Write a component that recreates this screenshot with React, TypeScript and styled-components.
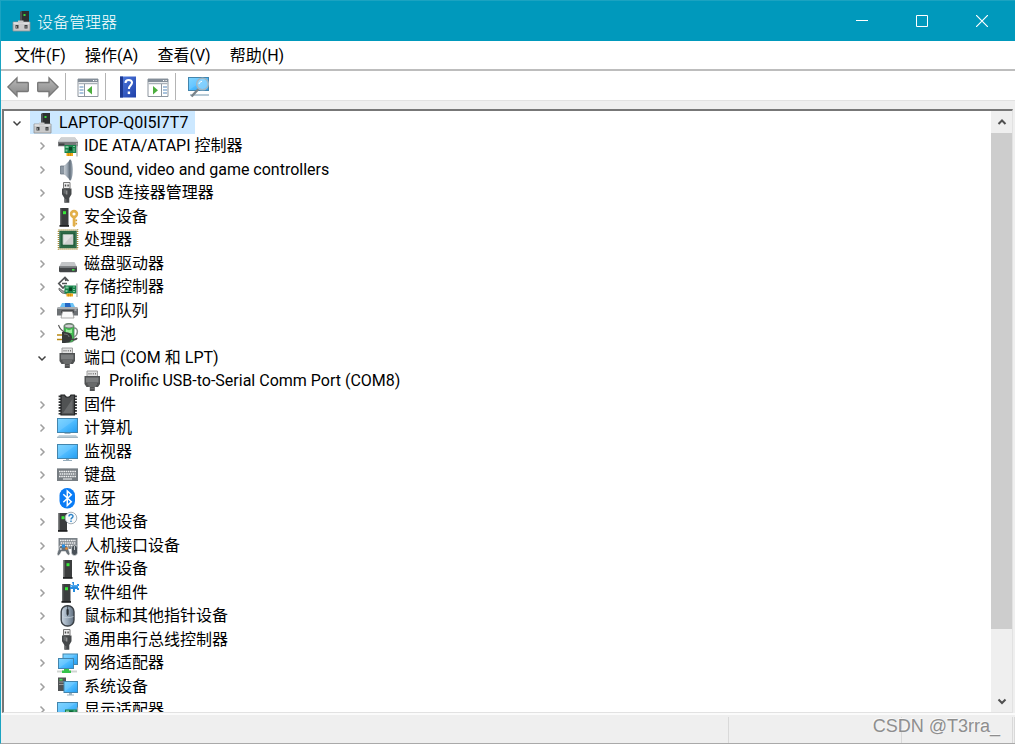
import React, { useState } from 'react';
import styled, { createGlobalStyle } from 'styled-components';

const GlobalStyle = createGlobalStyle`
  * { box-sizing: border-box; }
  body {
    margin: 0;
    font-family: Roboto, "Noto Sans CJK SC", sans-serif;
    font-size: 16px;
    color: #000;
  }
  button { font: inherit; color: inherit; background: none; border: 0; padding: 0; }
  svg { display: block; }
`;

const Window = styled.div`
  height: 100vh;
  display: flex;
  flex-direction: column;
  background: #efefef;
  border-left: 1px solid #1ba3c1;
  border-bottom: 1px solid #a9a9a9;
`;

const TitleBar = styled.header`
  flex: none;
  height: 41px;
  display: flex;
  align-items: center;
  gap: 4px;
  padding-left: 10px;
  background: #0099bc;
  border-top: 1px solid #1ba3c1;
  color: #fff;
`;

const Title = styled.h1`
  flex: 1;
  margin: 0;
  font-size: 16px;
  font-weight: 300;
  font-family: "Noto Sans CJK SC", sans-serif;
  line-height: 22px;
`;

const CaptionButton = styled.button`
  width: 60px;
  height: 40px;
  display: grid;
  place-items: center;
`;

const Captions = styled.div`
  display: flex;
  padding-right: 3px;
`;

const MenuBar = styled.nav`
  flex: none;
  height: 28px;
  display: flex;
  align-items: center;
  gap: 19px;
  padding: 2px 0 0 13px;
  background: #fff;
`;

const MenuButton = styled.button`
  line-height: 24px;
  white-space: nowrap;
`;

const ToolBar = styled.div`
  flex: none;
  height: 32px;
  display: flex;
  align-items: center;
  padding-top: 2px;
  background: #fff;
  border-top: 2px solid #bdbdbd;
  border-bottom: 1px solid #e2e2e2;
`;

const ToolGroup = styled.div<{ $first?: boolean; $last?: boolean }>`
  height: 27px;
  display: flex;
  align-items: center;
  gap: 8px;
  padding: 0 6px 0 ${p => (p.$first ? 6 : 11)}px;
  border-right: ${p => (p.$last ? 0 : 1)}px solid #b4b4b4;
`;

const Pane = styled.main`
  flex: 1;
  min-height: 0;
  margin: 8px 2px 0 1px;
  display: flex;
  background: #fff;
  border: 2px solid #777;
  border-right: 1px solid #e2e2e2;
  border-bottom: 1px solid #e2e2e2;
`;

const Tree = styled.ul`
  flex: 1;
  min-width: 0;
  margin: 0;
  padding: 0;
  list-style: none;
  overflow: hidden;
  display: grid;
  grid-auto-rows: 23px 24px;
  align-content: start;
`;

const Row = styled.li<{ $depth: number }>`
  display: flex;
  align-items: center;
  gap: 4px;
  padding-left: ${p => 4 + p.$depth * 25}px;
`;

const Expander = styled.button`
  width: 18px;
  height: 18px;
  display: grid;
  place-items: center;
`;

const ExpanderSpace = styled.span`
  width: 18px;
`;

const Node = styled.span<{ $selected?: boolean }>`
  height: 100%;
  display: flex;
  align-items: center;
  gap: 5px;
  padding: 0 7px 0 2px;
  line-height: 24px;
  white-space: pre;
  background: ${p => (p.$selected ? '#cce8ff' : 'transparent')};
`;

const ScrollBar = styled.div`
  width: 21px;
  display: flex;
  flex-direction: column;
  background: #efefef;
`;

const ScrollButton = styled.button`
  height: 22px;
  display: grid;
  place-items: center;
`;

const Track = styled.div`
  flex: 1;
  display: flex;
  flex-direction: column;
`;

const Thumb = styled.div`
  flex: 0 0 89%;
  background: #cdcdcd;
`;

const StatusBar = styled.footer`
  flex: none;
  height: 30px;
  position: relative;
  display: flex;
  border-top: 2px solid #fbfbfb;
`;

const StatusCell = styled.div<{ $width?: number }>`
  flex: ${p => (p.$width ? `0 0 ${p.$width}px` : '1')};
  margin-top: 2px;
  border-right: 1px solid #d9d9d9;
`;

const Watermark = styled.span`
  position: absolute;
  right: 15px;
  top: 0;
  font-family: "Liberation Sans", sans-serif;
  font-size: 18px;
  line-height: 22px;
  color: #8e8e8e;
  text-shadow: -1px -1px 0 #f8f8f8;
`;

const Svg = ({ children, size = 22 }: { children: React.ReactNode; size?: number }) => (
  <svg width={size} height={size} viewBox="0 0 22 22" aria-hidden="true">{children}</svg>
);

const HiddenSvg = styled.svg`
  position: absolute;
`;

const Defs = () => (
  <HiddenSvg width="0" height="0" aria-hidden="true">
    <defs>
      <linearGradient id="screen" x1="0" y1="0" x2="1" y2="1">
        <stop offset="0" stopColor="#6fd0ff" /><stop offset=".5" stopColor="#4fbcff" /><stop offset="1" stopColor="#239cf0" />
      </linearGradient>
      <linearGradient id="arrow" x1="0" y1="0" x2="0" y2="1">
        <stop offset="0" stopColor="#b9b9b9" /><stop offset="1" stopColor="#858585" />
      </linearGradient>
      <linearGradient id="cone" x1="0" y1="0" x2="1" y2="0">
        <stop offset="0" stopColor="#c3cad1" /><stop offset=".5" stopColor="#a2adb8" /><stop offset="1" stopColor="#5d6a77" />
      </linearGradient>
      <linearGradient id="help" x1="0" y1="0" x2="1" y2="1">
        <stop offset="0" stopColor="#4f7be0" /><stop offset="1" stopColor="#1f40a8" />
      </linearGradient>
      <linearGradient id="mouse" x1="0" y1="0" x2="1" y2="0">
        <stop offset="0" stopColor="#cdd7e2" /><stop offset=".5" stopColor="#98a8b8" /><stop offset="1" stopColor="#5f6e7d" />
      </linearGradient>
    </defs>
  </HiddenSvg>
);

const Tower = ({ x, y = 2 }: { x: number; y?: number }) => (
  <g transform={`translate(${x} ${y})`}>
    <path d="M.5 0h8.5v18H.5z" fill="#3b3d3e" />
    <path d="M.5 0h1.300v18H.5z" fill="#67696a" />
    <path d="M0 17h9.500v1.800H0z" fill="#202122" />
    <path d="M3.500 3.200h3v3h-3z" fill="#38e83a" />
  </g>
);

const Screen = ({ x, y, w, h }: { x: number; y: number; w: number; h: number }) => (
  <>
    <rect x={x + 0.5} y={y + 0.5} width={w - 1} height={h - 1} fill="url(#screen)" stroke="#4385ad" />
    <path d={`M${x + 1} ${y + h - 1}L${x + w - 2} ${y + 1}H${x + 1}z`} fill="#fff" opacity=".12" />
  </>
);

const Board = ({ x, y }: { x: number; y: number }) => (
  <g transform={`translate(${x} ${y})`}>
    <path d="M0 1.500h12v8H0z" fill="#17834a" />
    <path d="M1 2.500h3v2H1zM1 6h2v2H1zM8.500 2.500h2v1h-2zM8.500 5h2v1h-2zM8.500 7h2v1h-2z" fill="#7cc49a" />
    <path d="M4.500 3.500h3v3.500h-3z" fill="#0a4327" />
    <path d="M2 9.500h6.500v3H2z" fill="#f0a91a" />
    <path d="M4 9.500v3M6 9.500v3" stroke="#b77b0b" strokeWidth=".5" />
    <path d="M11.500 0h1v13" fill="none" stroke="#a3a5a6" strokeWidth="1.200" />
  </g>
);

const SerialPlug = () => (
  <Svg>
    <path d="M5 1h10.500v6H5z" fill="#e1e1e1" stroke="#969696" strokeWidth=".9" />
    <path d="M7 3v1.500M9 3v1.500M11.300 3v1.500M13.500 3v1.500" stroke="#777" />
    <path d="M2.500 6h15.500v8l-2 3h-3.200v4H7.800v-4H4.500l-2-3z" fill="#505253" />
    <path d="M4 7.500h12.500v5H4z" fill="#7b7d7e" />
    <path d="M5.500 14h9.500M6.500 16h7.500" stroke="#8e9091" strokeWidth=".8" />
    <path d="M8.500 18.500h4" stroke="#777" strokeWidth=".7" />
  </Svg>
);

const UsbPlug = () => (
  <Svg>
    <path d="M6.500.5h6.500v6H6.500z" fill="#ededed" stroke="#777" />
    <path d="M7.800 2.500h1.400v2H7.800zM10.400 2.500h1.400v2h-1.400z" fill="#4b4b4b" />
    <path d="M5 6.500h9.500v5.800L12.300 16v4.800H7.300V16L5 12.300z" fill="#45484a" />
    <path d="M6.500 7.500h2.500v5l-1.200-1-1.300 0z" fill="#66696b" />
    <path d="M9.800 8.500v4" stroke="#c9c9c9" strokeWidth=".8" />
    <path d="M8.800 17v3" stroke="#777" />
  </Svg>
);

const KeyRows = ({ x, y, w }: { x: number; y: number; w: number }) => (
  <g stroke="#f0f1f2" strokeWidth="1.400" strokeDasharray="1.600 .6">
    <path d={`M${x} ${y}h${w}M${x + 0.6} ${y + 2.5}h${w - 1}M${x} ${y + 5}h${w}`} />
  </g>
);

const icons: Record<string, React.ReactNode> = {
  machine: (
    <Svg>
      <path d="M9 2l2-1h7v12H9z" fill="#2d3031" />
      <path d="M9 2l2-1v12H9z" fill="#4d5153" />
      <path d="M12.500 4h2v2h-2z" fill="#38d83c" />
      <path d="M2 12h17v9H2z" fill="#c9cacb" stroke="#909294" strokeWidth=".8" />
      <path d="M2.500 12.500h16v1h-16z" fill="#f7f7f7" />
      <path d="M7 10.500h5.500v3H7z" fill="#c9cacb" />
      <path d="M4.500 15h3v3.500h-3zM13.500 15h3v3.500h-3z" fill="#3e4142" />
      <path d="M5.500 16v2M15 16v2" stroke="#a9a9a9" strokeWidth=".7" />
    </Svg>
  ),
  ide: (
    <Svg>
      <path d="M4 2.500h14l3 4v5H1v-5z" fill="#aeb1b4" />
      <path d="M4 2.500h14l3 4H1z" fill="#cfd1d3" />
      <path d="M1 7h20v4H1z" fill="#77797b" />
      <path d="M2 8.500h5.500v2H2z" fill="#3e4143" />
      <Board x={7.5} y={8.5} />
    </Svg>
  ),
  sound: (
    <Svg>
      <path d="M3.500 7h5v8h-5z" fill="#8d98a3" stroke="#6a7580" strokeWidth=".8" />
      <path d="M7 7L13 1v20l-6-6z" fill="url(#cone)" />
      <path d="M12.500.5h1.300c1.200 2 1.900 6 1.900 10.500s-.7 8.500-1.900 10.500h-1.300z" fill="#8a96a2" />
      <path d="M13 1v20" stroke="#56626e" strokeWidth=".9" />
    </Svg>
  ),
  usb: <UsbPlug />,
  security: (
    <Svg>
      <Tower x={2.5} />
      <circle cx="17" cy="8" r="2.900" fill="none" stroke="#e2b04a" strokeWidth="2.600" />
      <path d="M15.700 11h2.800v8.500l-1.400 1.700-1.400-1.700z" fill="#e2b04a" />
      <path d="M18.500 13.500h1.600v1.800h-1.600M18.500 16.800h1.600v1.700h-1.600" fill="#d39c2c" />
    </Svg>
  ),
  cpu: (
    <Svg>
      <rect x="1.500" y="1" width="19" height="19" fill="none" stroke="#a98f38" strokeWidth="1.600" strokeDasharray="1.100 .9" />
      <path d="M2.300 1.800h17.400v17.400H2.300z" fill="#26603f" />
      <path d="M3.500 3h15v15h-15z" fill="none" stroke="#3e7f58" strokeWidth=".7" />
      <path d="M6 5.500h10v10H6z" fill="#e3e4e4" stroke="#a8bcae" strokeWidth=".8" />
      <path d="M7 15l8.500-9v9z" fill="#cfd0d0" />
    </Svg>
  ),
  disk: (
    <Svg>
      <path d="M4.500 9h13l2.500 5H2z" fill="#c3c5c7" />
      <path d="M2 13.500h18v5l-1 .8H3l-1-.8z" fill="#434648" />
      <path d="M2.500 14h17v1h-17z" fill="#787b7e" />
      <path d="M15 16h2.500v1.600H15z" fill="#41df49" />
    </Svg>
  ),
  storage: (
    <Svg>
      <path d="M11.500 5L8 1.500 1.800 7.500 6 12l2.500-2.500M8 1.500l1 3.500M5 7.500h5" fill="none" stroke="#515456" strokeWidth="1.700" />
      <path d="M2 12l4 3h4v3L5 17l-3-3z" fill="#9da1a4" stroke="#666" strokeWidth=".8" />
      <Board x={7.5} y={8} />
    </Svg>
  ),
  printer: (
    <Svg>
      <path d="M5 3h11l2 4H3z" fill="#6cc3f5" />
      <path d="M8 3h5l1 4H8z" fill="#2467c4" />
      <path d="M1 7h19l1 2v6.500H0V9z" fill="#6d7174" />
      <path d="M1 7h19l1 2H0z" fill="#aaaeb1" />
      <path d="M4.500 10.500h12v2.500h-12z" fill="#242729" />
      <path d="M5.500 11.500h10l1.500 6.500H4z" fill="#fafafa" stroke="#888" strokeWidth=".7" />
      <path d="M17.500 9.500h2v1h-2z" fill="#d4d6d8" />
    </Svg>
  ),
  battery: (
    <Svg>
      <path d="M7 3c0-3.500 10-3.500 10 0v14c0 3-10 3-10 0z" fill="#41bd51" stroke="#4d6f55" strokeWidth=".8" />
      <ellipse cx="12" cy="3" rx="4.500" ry="2" fill="#cdd2d0" stroke="#626765" strokeWidth=".8" />
      <path d="M9 6c2 1.500 4 1.500 6 0v4H9z" fill="#9deb9c" />
      <path d="M17 5c5 0 4 7 0 9" stroke="#858c88" strokeWidth="1.500" fill="none" />
      <path d="M1.500 2c1 3 2 5 6 7" stroke="#555" strokeWidth="1.100" fill="none" />
      <path d="M0 12h5M0 16.500h5" stroke="#b98913" strokeWidth="1.600" />
      <path d="M5 9h3c5 0 7 3 7 5.500S13 20 8 20H5z" fill="#373939" />
      <path d="M7 11c3 0 5 1 5 3" stroke="#777" fill="none" />
      <path d="M14 16c3 1 5 1 6-1" stroke="#444" strokeWidth="1.800" fill="none" />
    </Svg>
  ),
  port: <SerialPlug />,
  firmware: (
    <Svg>
      <path d="M2.800 1.500v19M18.700 1.500v19" stroke="#2d2f30" strokeWidth="2.400" strokeDasharray="1.700 1.200" />
      <path d="M4 1h3.500c1 3 5.500 3 6.500 0h3.500v20H4z" fill="#505253" stroke="#222425" strokeWidth="1.200" />
      <path d="M6 19L15.500 5v14z" fill="#696b6c" />
    </Svg>
  ),
  computer: (
    <Svg>
      <Screen x={0} y={1} w={21} h={15} />
      <path d="M7.500 16h6v1h-6z" fill="#9fb6c4" />
      <path d="M2 18h17l2 2.500H0z" fill="#c6d5de" />
      <path d="M0 20.300h21" stroke="#829caa" strokeWidth=".8" />
    </Svg>
  ),
  monitor: (
    <Svg>
      <Screen x={0} y={3} w={21} h={15} />
      <path d="M9 18h3v1h3v1H6v-1h3z" fill="#96adbc" />
    </Svg>
  ),
  keyboard: (
    <Svg>
      <path d="M0 4h21v13H0z" fill="#777d82" />
      <path d="M0 4h21v1H0z" fill="#a8adb1" />
      <KeyRows x={2} y={7.5} w={17} />
      <path d="M6 15h9" stroke="#e3e5e7" strokeWidth="1.200" />
    </Svg>
  ),
  bluetooth: (
    <Svg>
      <rect x="2.500" y="0" width="15.500" height="20.500" rx="7.500" fill="#0a7cf5" />
      <path d="M6.300 6.300l8 7.400-4 3.800V3l4 3.700-8 7.500" fill="none" stroke="#fff" strokeWidth="1.500" />
    </Svg>
  ),
  other: (
    <Svg>
      <Tower x={1} />
      <circle cx="14" cy="7" r="5.800" fill="#f7fafc" stroke="#a5afb7" />
      <path d="M12 5.500c0-2.600 4-2.600 4-.2 0 1.700-2 1.500-2 3.200M14 9.500v1.500" fill="none" stroke="#2c82c6" strokeWidth="1.400" />
    </Svg>
  ),
  hid: (
    <Svg>
      <path d="M1.500 3h19v11h-19z" fill="#7c8389" />
      <KeyRows x={3} y={5.5} w={16} />
      <path d="M2.500 11c2-.8 6-.8 8 0l2.500 8c-1.500 2.500-3 .5-4.500-2.500h-4C3 20 1 22 0 19z" fill="#687077" stroke="#f1f1f1" strokeWidth=".6" />
      <path d="M5 9.500h3v3H5z" fill="#258fe6" />
      <circle cx="9.500" cy="13.500" r="1.200" fill="#ef8a2c" />
      <circle cx="3.800" cy="14" r="1.100" fill="#c6cdd2" />
      <rect x="14.500" y="10" width="6" height="10.500" rx="3" fill="#495158" stroke="#d8dde0" strokeWidth=".7" />
      <path d="M17.500 11v4" stroke="#bcc3c8" />
    </Svg>
  ),
  software: <Svg><Tower x={6} /></Svg>,
  component: (
    <Svg>
      <Tower x={4.5} />
      <path d="M15 0h2v3h3v-1h2v2h-1v2h1v2h-2V7h-2v3h-2V7h-3V5h2V3h1z" fill="#278de0" />
      <path d="M13 3h8v1.500h-8z" fill="#4fa6ec" />
    </Svg>
  ),
  mouse: (
    <Svg>
      <rect x="4.200" y=".7" width="12.800" height="20.300" rx="6" fill="url(#mouse)" stroke="#3b4147" strokeWidth="1.400" />
      <path d="M10.600 1v10" stroke="#47515a" />
      <rect x="9.500" y="4" width="2.200" height="6" rx="1.100" fill="#2b3036" />
      <path d="M5 11.500c3 1.500 8 1.500 11.500 0" stroke="#cbd5de" strokeWidth=".7" fill="none" />
    </Svg>
  ),
  network: (
    <Svg>
      <Screen x={5.5} y={1.5} w={15.5} h={11.5} />
      <Screen x={1} y={6} w={16} h={11} />
      <path d="M0 18.500h20v2H0z" fill="#d0d5d2" />
      <path d="M7 17h5v1.500h2V21H5v-2.500h2z" fill="#35c44b" />
    </Svg>
  ),
  system: (
    <Svg>
      <path d="M1 1.500h8V15H1z" fill="#505355" />
      <path d="M2 6h5M2 8.500h5" stroke="#999" />
      <path d="M2.500 2.800h3v1.700h-3z" fill="#44de55" />
      <Screen x={6.5} y={5} w={14.5} h={12} />
      <path d="M12 17h3v1.500h2v1h-7v-1h2z" fill="#9bb2c0" />
    </Svg>
  ),
  display: (
    <Svg>
      <Screen x={0} y={3} w={21} h={14} />
      <Board x={8} y={9} />
    </Svg>
  ),
};

const Arrow = ({ flip }: { flip?: boolean }) => (
  <Svg>
    <path
      transform={flip ? 'matrix(-1 0 0 1 22 0)' : undefined}
      d="M.8 11L10 1.800V6.500h10.500q.8 0 .8.800v7.400q0 .8-.8.8H10v4.700z"
      fill="url(#arrow)" stroke="#777" strokeWidth="1.300"
    />
  </Svg>
);

const PanelIcon = ({ right }: { right?: boolean }) => (
  <Svg>
    <path d="M1 3h20v17.500H1z" fill="#fff" stroke="#8e969f" />
    <path d="M1 3h20v3H1z" fill="#848e99" />
    <path d="M1.500 7.500h19" stroke="#a9b1b9" strokeWidth="1.500" />
    <path d="M16 4.500h1.200M18.500 4.500h1.200" stroke="#fff" />
    <path d={right ? 'M14.500 8v12.500' : 'M7.500 8v12.500'} stroke="#8e969f" />
    <path d={right ? 'M16 11h4M16 14h4M16 17h4' : 'M2.500 11h4M2.500 14h4M2.500 17h4'} stroke="#5488bc" strokeWidth="1.200" />
    <path d={right ? 'M6 10l5 4.300-5 4.300z' : 'M15 10l-5 4.300 5 4.300z'} fill="#4cae3e" />
  </Svg>
);

const HelpIcon = () => (
  <Svg>
    <path d="M3 .5h16v21H3z" fill="url(#help)" />
    <path d="M3 .5h3v21H3z" fill="#1d3991" />
    <path d="M8.500 7c0-4 6.500-3.800 6.500-.4 0 3-3.100 3-3.100 6.400" fill="none" stroke="#fff" strokeWidth="2.100" />
    <path d="M10.700 15.500h2.400v2.600h-2.400z" fill="#fff" />
  </Svg>
);

const ScanIcon = () => (
  <Svg>
    <Screen x={1} y={1} w={21} h={14} />
    <path d="M3 18h19v2H3z" fill="#b7cad6" />
    <path d="M11.500 13l-7 7.500" stroke="#7a8389" strokeWidth="2.400" />
    <circle cx="15.500" cy="8" r="5.800" fill="#9bdcff" fillOpacity=".7" stroke="#9eb6c4" strokeWidth="1.500" />
    <path d="M12 8c.5-1.500 1.500-2.500 3-2.700" stroke="#fff" fill="none" />
  </Svg>
);

const Chevron = ({ dir, color, bold }: { dir: 'up' | 'down' | 'right'; color: string; bold?: boolean }) => {
  const paths = { up: 'M2.500 8L6 4.500 9.500 8', down: 'M2.500 4.500L6 8l3.500-3.500', right: 'M4.500 2.500L8 6 4.500 9.500' };
  return (
    <svg width="12" height="12" viewBox="0 0 12 12" aria-hidden="true">
      <path d={paths[dir]} fill="none" stroke={color} strokeWidth={bold ? 2 : 1.5} />
    </svg>
  );
};

type Device = { label: string; icon: string; children?: Device[] };

const devices: Device[] = [
  { label: 'IDE ATA/ATAPI 控制器', icon: 'ide' },
  { label: 'Sound, video and game controllers', icon: 'sound' },
  { label: 'USB 连接器管理器', icon: 'usb' },
  { label: '安全设备', icon: 'security' },
  { label: '处理器', icon: 'cpu' },
  { label: '磁盘驱动器', icon: 'disk' },
  { label: '存储控制器', icon: 'storage' },
  { label: '打印队列', icon: 'printer' },
  { label: '电池', icon: 'battery' },
  { label: '端口 (COM 和 LPT)', icon: 'port', children: [{ label: 'Prolific USB-to-Serial Comm Port (COM8)', icon: 'port' }] },
  { label: '固件', icon: 'firmware' },
  { label: '计算机', icon: 'computer' },
  { label: '监视器', icon: 'monitor' },
  { label: '键盘', icon: 'keyboard' },
  { label: '蓝牙', icon: 'bluetooth' },
  { label: '其他设备', icon: 'other' },
  { label: '人机接口设备', icon: 'hid' },
  { label: '软件设备', icon: 'software' },
  { label: '软件组件', icon: 'component' },
  { label: '鼠标和其他指针设备', icon: 'mouse' },
  { label: '通用串行总线控制器', icon: 'usb' },
  { label: '网络适配器', icon: 'network' },
  { label: '系统设备', icon: 'system' },
  { label: '显示适配器', icon: 'display' },
];

type RowProps = { device: Device; depth: number; open?: boolean; leaf?: boolean; selected?: boolean; onToggle?: () => void };

const DeviceRow = ({ device, depth, open, leaf, selected, onToggle }: RowProps) => (
  <Row $depth={depth} role="treeitem" aria-level={depth + 1} aria-expanded={leaf ? undefined : !!open} aria-selected={!!selected}>
    {leaf ? <ExpanderSpace /> : (
      <Expander aria-label={device.label} onClick={onToggle}>
        <Chevron dir={open ? 'down' : 'right'} color={open ? '#404040' : '#a0a0a0'} />
      </Expander>
    )}
    <Node $selected={selected}>
      {icons[device.icon]}
      <span>{device.label}</span>
    </Node>
  </Row>
);

export default function App() {
  const [rootOpen, setRootOpen] = useState(true);
  const [portsOpen, setPortsOpen] = useState(true);

  return (
    <Window>
      <GlobalStyle />
      <Defs />
      <TitleBar>
        {icons.machine}
        <Title>设备管理器</Title>
        <Captions>
          <CaptionButton aria-label="最小化">
            <svg width="12" height="12"><path d="M0 5.500h12" stroke="#fff" /></svg>
          </CaptionButton>
          <CaptionButton aria-label="最大化">
            <svg width="12" height="12"><path d="M.5.5h11v11H.5z" fill="none" stroke="#fff" /></svg>
          </CaptionButton>
          <CaptionButton aria-label="关闭">
            <svg width="12" height="12"><path d="M0 0l12 12M12 0L0 12" stroke="#fff" strokeWidth="1.200" /></svg>
          </CaptionButton>
        </Captions>
      </TitleBar>
      <MenuBar>
        {['文件(F)', '操作(A)', '查看(V)', '帮助(H)'].map(item => (
          <MenuButton key={item}>{item}</MenuButton>
        ))}
      </MenuBar>
      <ToolBar role="toolbar">
        <ToolGroup $first>
          <button aria-label="后退"><Arrow /></button>
          <button aria-label="前进"><Arrow flip /></button>
        </ToolGroup>
        <ToolGroup>
          <button aria-label="显示/隐藏控制台树"><PanelIcon /></button>
        </ToolGroup>
        <ToolGroup>
          <button aria-label="帮助"><HelpIcon /></button>
          <button aria-label="显示/隐藏操作窗格"><PanelIcon right /></button>
        </ToolGroup>
        <ToolGroup $last>
          <button aria-label="扫描检测硬件改动"><ScanIcon /></button>
        </ToolGroup>
      </ToolBar>
      <Pane>
        <Tree role="tree">
          <DeviceRow device={{ label: 'LAPTOP-Q0I5I7T7', icon: 'machine' }} depth={0} open={rootOpen} selected onToggle={() => setRootOpen(!rootOpen)} />
          {rootOpen && devices.map(device => (
            <React.Fragment key={device.label}>
              <DeviceRow
                device={device}
                depth={1}
                open={!!device.children && portsOpen}
                onToggle={device.children ? () => setPortsOpen(!portsOpen) : undefined}
              />
              {portsOpen && device.children?.map(child => (
                <DeviceRow key={child.label} device={child} depth={2} leaf />
              ))}
            </React.Fragment>
          ))}
        </Tree>
        <ScrollBar>
          <ScrollButton aria-label="向上滚动"><Chevron dir="up" color="#505050" bold /></ScrollButton>
          <Track><Thumb /></Track>
          <ScrollButton aria-label="向下滚动"><Chevron dir="down" color="#505050" bold /></ScrollButton>
        </ScrollBar>
      </Pane>
      <StatusBar>
        <StatusCell />
        <StatusCell $width={173} />
        <StatusCell $width={111} />
        <StatusCell $width={2} />
        <Watermark>CSDN @T3rra_</Watermark>
      </StatusBar>
    </Window>
  );
}
